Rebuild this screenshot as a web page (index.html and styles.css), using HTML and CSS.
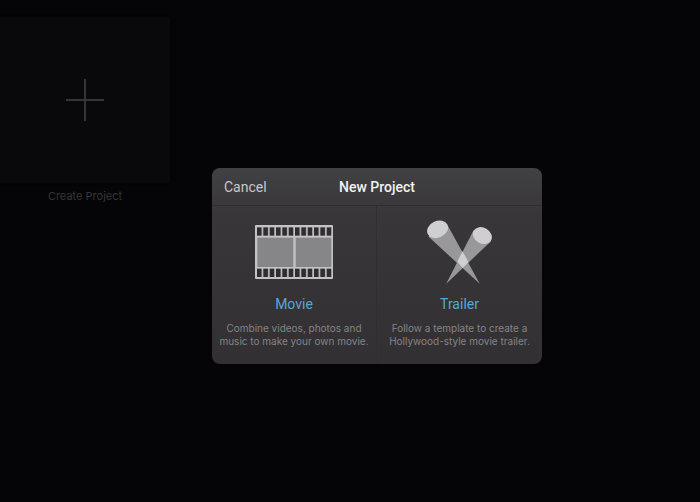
FILE: index.html
```html
<!DOCTYPE html>
<html lang="en">
<head>
<meta charset="utf-8">
<meta name="viewport" content="width=device-width, initial-scale=1">
<title>New Project</title>
<link rel="stylesheet" href="styles.css">
</head>
<body>
<main class="projects">
  <button class="create" type="button">
    <span class="create-tile">
      <svg class="plus" viewBox="0 0 38 42" aria-hidden="true"><path d="M0 21H38M19 0V42"/></svg>
    </span>
    <span class="create-label">Create Project</span>
  </button>
</main>
<div class="overlay">
  <section class="dialog" role="dialog" aria-labelledby="dialog-title">
    <header class="dialog-bar">
      <button class="cancel" type="button">Cancel</button>
      <h1 class="title" id="dialog-title">New Project</h1>
    </header>
    <div class="choices">
      <button class="choice" type="button">
        <span class="choice-art">
          <svg class="film" viewBox="0 0 234 162" aria-hidden="true">
            <defs>
              <pattern id="holes" x="6" y="0" width="19" height="162" patternUnits="userSpaceOnUse">
                <rect x="0" y="7" width="14" height="25"/>
                <rect x="0" y="131" width="14" height="25"/>
              </pattern>
            </defs>
            <rect class="film-edge" width="234" height="162" rx="3"/>
            <rect x="6" width="225" height="162" fill="url(#holes)"/>
            <rect class="film-frame" x="7" y="38" width="108" height="88"/>
            <rect class="film-frame" x="122" y="38" width="107" height="88"/>
          </svg>
        </span>
        <span class="choice-name">Movie</span>
        <span class="choice-text">Combine videos, photos and<br>music to make your own movie.</span>
      </button>
      <button class="choice" type="button">
        <span class="choice-art">
          <svg class="lights" viewBox="35 32 196 193" aria-hidden="true">
            <path class="beam" d="M39 82L98 49L194 224Z"/>
            <path class="beam" d="M175 64L229 95L93 224Z"/>
            <path class="cross" d="M142 126L160 159L143 177L126 159Z"/>
            <ellipse class="lamp" cx="67" cy="60" rx="33" ry="25" transform="rotate(-25 67 60)"/>
            <ellipse class="lamp" cx="202" cy="79" rx="30" ry="24" transform="rotate(30 202 79)"/>
          </svg>
        </span>
        <span class="choice-name">Trailer</span>
        <span class="choice-text">Follow a template to create a<br>Hollywood-style movie trailer.</span>
      </button>
    </div>
  </section>
</div>
</body>
</html>
```
FILE: styles.css
```css
* {
  box-sizing: border-box;
}

body {
  margin: 0;
  min-height: 100vh;
  background: #050406;
  font-family: Roboto, "Liberation Sans", sans-serif;
}

button {
  margin: 0;
  padding: 0;
  border: 0;
  background: none;
  color: inherit;
  font: inherit;
}

.projects {
  padding-top: 17px;
}

.create {
  display: flex;
  flex-direction: column;
  align-items: center;
  gap: 6px;
  width: 170px;
}

.create-tile {
  display: flex;
  align-items: center;
  justify-content: center;
  width: 100%;
  height: 166px;
  background: #09080a;
  box-shadow: 0 0 3px #020203;
}

.plus {
  width: 38px;
  height: 42px;
  stroke: #353436;
  stroke-width: 2;
}

.create-label {
  color: #363537;
  font-family: Inter, sans-serif;
  font-size: 11px;
  line-height: 14px;
}

.overlay {
  position: absolute;
  inset: 0;
  display: flex;
  align-items: center;
  justify-content: center;
  padding: 30px 0 0 54px;
}

.dialog {
  width: 330px;
  max-width: 100%;
  overflow: hidden;
  border-radius: 8px;
  background: linear-gradient(#414042, #383638 25%, #343234 75%, #323033);
}

.dialog-bar {
  display: grid;
  grid-template-columns: 1fr auto 1fr;
  align-items: center;
  height: 38px;
  padding: 0 12px;
  border-bottom: 1px solid #302e30;
}

.cancel {
  justify-self: start;
  color: #c8c7c9;
  font-size: 14px;
  line-height: 18px;
}

.title {
  margin: 0;
  color: #f2f1f3;
  font-size: 14px;
  font-weight: 500;
  line-height: 18px;
}

.choices {
  display: grid;
  grid-template-columns: 1fr 1fr;
}

.choice {
  display: flex;
  flex-direction: column;
  align-items: center;
  padding: 13px 0 16px;
}

.choice:first-child {
  border-right: 1px solid #302e30;
}

.choice-art {
  display: flex;
  align-items: center;
  justify-content: center;
  height: 66px;
}

.film {
  width: 78px;
  height: 54px;
  fill: #2f2d30;
}

.film-edge {
  fill: #c3c2c4;
}

.film-frame {
  fill: #868587;
}

.lights {
  width: 65px;
  height: 64px;
}

.beam {
  fill: #98979a;
}

.cross,
.lamp {
  fill: #cfced0;
}

.choice-name {
  margin-top: 9px;
  color: #56a8d4;
  font-size: 14px;
  line-height: 20px;
}

.choice-text {
  margin-top: 8px;
  color: #858486;
  font-family: Inter, sans-serif;
  font-size: 10px;
  line-height: 13px;
  white-space: nowrap;
}
```
